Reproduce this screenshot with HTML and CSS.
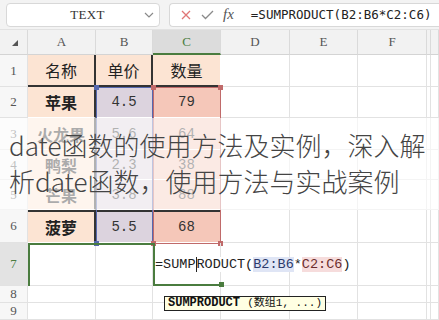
FILE: index.html
```html
<!DOCTYPE html>
<html lang="zh-CN">
<head>
<meta charset="utf-8">
<title>date函数</title>
<link rel="stylesheet" href="styles.css">
</head>
<body>
<div class="app">
  <div class="bar">
    <div class="namebox">
      <span class="name">TEXT</span>
      <svg class="chev" width="10" height="6" viewBox="0 0 10 6"><polyline points="1,1 5,5 9,1" fill="none" stroke="#8a8a8a" stroke-width="1.2"/></svg>
    </div>
    <div class="fbox">
      <svg class="ico-x" width="10" height="10" viewBox="0 0 10 10"><path d="M1 1 L9 9 M9 1 L1 9" stroke="#e07676" stroke-width="1.3" fill="none"/></svg>
      <svg class="ico-ok" width="13" height="10" viewBox="0 0 13 10"><polyline points="1,5 4.5,8.5 12,1" fill="none" stroke="#8a8a8a" stroke-width="1.3"/></svg>
      <span class="fx">fx</span>
      <span class="ftext">=SUMPRODUCT(B2:B6*C2:C6)</span>
    </div>
  </div>

  <div class="sheet">
    <div class="grid cells">
      <div class="c ch corner"><svg width="6" height="6" viewBox="0 0 6 6"><polygon points="6,0 6,6 0,6" fill="#555"/></svg></div>
      <div class="c ch">A</div><div class="c ch">B</div><div class="c ch sel">C</div><div class="c ch">D</div><div class="c ch">E</div><div class="c ch">F</div><div class="c ch"></div><div class="c ch"></div>

      <div class="c rh">1</div>
      <div class="c t pe r1 ca">名称</div><div class="c t pe r1 cb">单价</div><div class="c t pe r1">数量</div>
      <div class="c"></div><div class="c"></div><div class="c"></div><div class="c"></div><div class="c"></div>

      <div class="c rh">2</div>
      <div class="c t pe ca b">苹果</div><div class="c t lv num">4.5</div><div class="c t sa num">79</div>
      <div class="c"></div><div class="c"></div><div class="c"></div><div class="c"></div><div class="c"></div>

      <div class="c rh">3</div>
      <div class="c t pe ca b">火龙果</div><div class="c t lv num">5.6</div><div class="c t sa num">64</div>
      <div class="c"></div><div class="c"></div><div class="c"></div><div class="c"></div><div class="c"></div>

      <div class="c rh">4</div>
      <div class="c t pe ca b">鸭梨</div><div class="c t lv num">2.3</div><div class="c t sa num">38</div>
      <div class="c"></div><div class="c"></div><div class="c"></div><div class="c"></div><div class="c"></div>

      <div class="c rh">5</div>
      <div class="c t pe ca b">芒果</div><div class="c t lv num">3.8</div><div class="c t sa num">88</div>
      <div class="c"></div><div class="c"></div><div class="c"></div><div class="c"></div><div class="c"></div>

      <div class="c rh">6</div>
      <div class="c t pe ca b r6">菠萝</div><div class="c t lv num r6">5.5</div><div class="c t sa num r6">68</div>
      <div class="c"></div><div class="c"></div><div class="c"></div><div class="c"></div><div class="c"></div>

      <div class="c rh rsel">7</div>
      <div class="c"></div><div class="c"></div>
      <div class="c c7"><span class="ftx">=SUMP<span class="caret"></span>RODUCT(<span class="rb">B2:B6</span>*<span class="rc">C2:C6</span>)</span></div>
      <div class="c"></div><div class="c"></div><div class="c"></div><div class="c"></div><div class="c"></div>

      <div class="c rh">8</div>
      <div class="c"></div><div class="c"></div><div class="c"></div><div class="c"></div><div class="c"></div><div class="c"></div><div class="c"></div><div class="c"></div>

      <div class="c rh">9</div>
      <div class="c"></div><div class="c"></div><div class="c"></div><div class="c"></div><div class="c"></div><div class="c"></div><div class="c"></div><div class="c"></div>
    </div>

    <div class="grid over">
      <div class="selb"><span class="h tl"></span><span class="h bl"></span></div>
      <div class="selc"><span class="h tl"></span><span class="h tr"></span><span class="h bl"></span><span class="h br"></span></div>
      <div class="act-ab"></div>
      <div class="act-c"><span class="h br"></span></div>

      <div class="band">
        <p class="title">date函数的使用方法及实例，深入解<br>析date函数，使用方法与实战案例</p>
      </div>

      <div class="tip"><b>SUMPRODUCT</b> <span class="args">(数组1, ...)</span></div>
    </div>
  </div>
</div>
</body>
</html>
```

FILE: styles.css
```css
* { box-sizing: border-box; margin: 0; padding: 0; }

body {
  width: 439px;
  height: 320px;
  overflow: hidden;
  background: #fff;
  font-family: "Noto Sans CJK SC", "Noto Sans", sans-serif;
  color: #222;
}

.bar {
  height: 30px;
  background: #f3f3f3;
  border-bottom: 1px solid #e2e2e2;
  display: flex;
  align-items: center;
  padding-left: 6px;
  gap: 9px;
}

.namebox {
  width: 154px;
  height: 24px;
  background: #fff;
  border: 1px solid #d8d8d8;
  border-radius: 4px;
  display: flex;
  align-items: center;
  padding-left: 24px;
  padding-right: 5px;
}

.name {
  flex: 1;
  text-align: center;
  font-family: "Liberation Serif", serif;
  font-size: 13px;
  color: #333;
  letter-spacing: 0.3px;
}

.fbox {
  flex: 1;
  height: 24px;
  background: #fff;
  border: 1px solid #d8d8d8;
  border-right: none;
  border-radius: 4px 0 0 4px;
  display: flex;
  align-items: center;
  padding-left: 11px;
}

.ico-ok { margin-left: 10px; }

.fx {
  margin-left: 9px;
  font-family: "Liberation Serif", serif;
  font-style: italic;
  font-size: 15px;
  color: #555;
}

.ftext {
  margin-left: 17px;
  font-family: "DejaVu Sans Mono", monospace;
  font-size: 12.5px;
  color: #222;
  white-space: nowrap;
}

.sheet {
  position: relative;
  height: 290px;
}

.grid {
  display: grid;
  grid-template-columns: 28px 68px 57px 68px 69px 68px 69px 4px 1fr;
  grid-template-rows: 25px 32px 31px 32px 30px 30px 33px 43px 17px 17px;
}

.over {
  position: absolute;
  inset: 0;
  pointer-events: none;
}

.c {
  border-right: 1px solid #e2e2e2;
  border-bottom: 1px solid #e2e2e2;
  display: flex;
  align-items: center;
  justify-content: center;
  min-width: 0;
}

.ch {
  background: #f2f2f2;
  border-right-color: #dadada;
  border-bottom-color: #d4d4d4;
  font-family: "Liberation Serif", serif;
  font-size: 13px;
  color: #555;
}

.ch.sel {
  background: #dcdcdc;
  color: #4a7c3f;
  border-bottom: 2px solid #4a7c3f;
}

.corner svg { margin-left: 2px; margin-top: 2px; }

.rh {
  background: #f7f7f7;
  font-family: "Liberation Serif", serif;
  font-size: 13px;
  color: #555;
}

.rh.rsel {
  background: #e3e3e3;
  color: #4a7c3f;
}

.t {
  border-right-color: #fff;
  border-bottom-color: #fff;
  font-size: 16px;
  color: #222;
}

.pe { background: #fce4d3; }
.lv { background: #dcd3de; }
.sa { background: #f5c7b9; }

.b { font-weight: 700; font-size: 16px; }

.num {
  font-family: "Liberation Mono", monospace;
  font-size: 14px;
  color: #333;
}

.r1 { border-bottom: 2px solid #333; }
.ca { border-right: 2px solid #333; }
.r1.cb { border-right: 2px solid #333; }
.r6 { border-top: 2px solid #333; }

.c7 {
  justify-content: flex-start;
  padding-left: 2px;
  position: relative;
  z-index: 2;
  overflow: visible;
}

.ftx {
  background: #fff;
  white-space: nowrap;
  font-family: "Liberation Mono", monospace;
  font-size: 13.5px;
  color: #222;
  display: flex;
  align-items: center;
}

.caret {
  display: inline-block;
  width: 1px;
  height: 15px;
  background: #222;
}

.rb { background: #dfe5f5; color: #2c3a6c; }
.rc { background: #f6dcdc; color: #6c2c2c; }

.selb {
  grid-column: 3;
  grid-row: 3 / 8;
  border: 1px solid #5668ae;
  position: relative;
  z-index: 1;
  margin-bottom: -1px;
}

.selc {
  grid-column: 4;
  grid-row: 3 / 8;
  border: 1px solid #c06a6a;
  position: relative;
  z-index: 1;
  margin-bottom: -1px;
}

.h {
  position: absolute;
  width: 5px;
  height: 5px;
}
.selb .h { background: #5668ae; }
.selc .h { background: #c06a6a; }
.h.tl { left: -3px; top: -3px; }
.h.tr { right: -3px; top: -3px; }
.h.bl { left: -3px; bottom: -3px; }
.h.br { right: -3px; bottom: -3px; }

.act-ab {
  grid-column: 2 / 4;
  grid-row: 8;
  border-top: 2px solid #4a7c3f;
  border-left: 2px solid #4a7c3f;
  z-index: 1;
}

.act-c {
  grid-column: 4;
  grid-row: 8;
  border-left: 2px solid #4a7c3f;
  border-bottom: 2px solid #4a7c3f;
  position: relative;
  z-index: 3;
}
.act-c .h { background: #4a7c3f; }

.band {
  grid-column: 1 / -1;
  grid-row: 4 / 7;
  background: rgba(255, 255, 255, 0.62);
  z-index: 5;
  padding: 9px 0 0 9px;
  overflow: visible;
}

.title {
  font-size: 26px;
  line-height: 36px;
  color: #444;
  white-space: nowrap;
  font-weight: 300;
}

.tip {
  grid-column: 4 / 8;
  grid-row: 9 / 11;
  justify-self: start;
  align-self: start;
  margin-left: 11px;
  margin-top: 10px;
  z-index: 6;
  background: #ffffe3;
  border: 1px solid #222;
  padding: 0 3px;
  font-family: "Liberation Mono", "Noto Sans CJK SC", monospace;
  font-size: 12px;
  line-height: 13px;
  color: #111;
  white-space: nowrap;
}

.args {
  font-size: 11px;
}
```
